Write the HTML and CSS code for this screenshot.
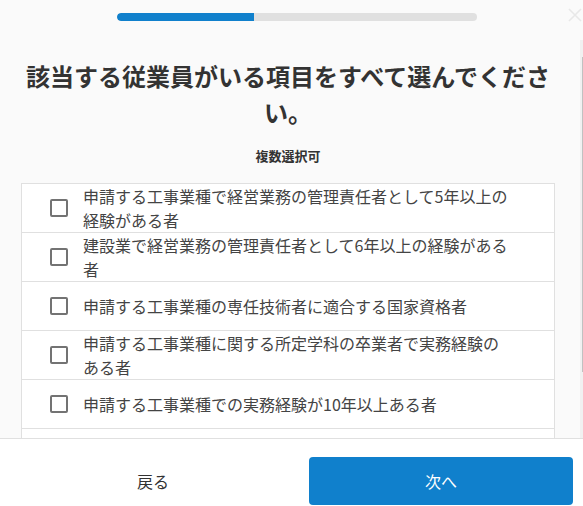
FILE: index.html
```html
<!DOCTYPE html>
<html lang="ja">
<head>
<meta charset="utf-8">
<title>従業員の選択</title>
<link rel="stylesheet" href="styles.css">
</head>
<body>
<div class="page">
  <header class="header">
    <div class="progress"><div class="progress-fill" style="width:38%"></div></div>
    <svg class="close" viewBox="0 0 14 14" width="14" height="14" aria-hidden="true"><path d="M1 1L13 13M13 1L1 13" stroke="#e8e8e8" stroke-width="1.6" fill="none"/></svg>
  </header>
  <main class="main">
    <div class="content">
      <h1 class="title">該当する従業員がいる項目をすべて選んでください。</h1>
      <p class="sub">複数選択可</p>
      <ul class="list">
        <li class="row"><span class="box"></span><span class="label">申請する工事業種で経営業務の管理責任者として5年以上の経験がある者</span></li>
        <li class="row"><span class="box"></span><span class="label">建設業で経営業務の管理責任者として6年以上の経験がある者</span></li>
        <li class="row"><span class="box"></span><span class="label">申請する工事業種の専任技術者に適合する国家資格者</span></li>
        <li class="row"><span class="box"></span><span class="label">申請する工事業種に関する所定学科の卒業者で実務経験のある者</span></li>
        <li class="row"><span class="box"></span><span class="label">申請する工事業種での実務経験が10年以上ある者</span></li>
        <li class="row"><span class="box"></span><span class="label">該当する者はいない</span></li>
      </ul>
    </div>
    <div class="scroll-track"><div class="scroll-thumb"></div></div>
  </main>
  <footer class="footer">
    <button class="btn btn-back" type="button">戻る</button>
    <button class="btn btn-next" type="button">次へ</button>
  </footer>
</div>
</body>
</html>
```
FILE: styles.css
```css
html, body {
  margin: 0;
  padding: 0;
  background: #fafafa;
}
body {
  font-family: "Noto Sans CJK JP", "Noto Sans", sans-serif;
  color: #333;
}
.page {
  display: flex;
  flex-direction: column;
  height: 506px;
  width: 583px;
  overflow: hidden;
}
.header {
  position: relative;
  height: 40px;
  flex: none;
  padding-top: 13px;
  box-sizing: border-box;
}
.progress {
  margin-left: 117px;
  width: 360px;
  height: 8px;
  border-radius: 4px;
  background: #e0e0e0;
  overflow: hidden;
}
.progress-fill {
  height: 100%;
  background: #1080cc;
  border-radius: 4px 0 0 4px;
}
.close {
  position: absolute;
  left: 568px;
  top: 8px;
}
.main {
  position: relative;
  flex: 1;
  overflow: hidden;
}
.content {
  width: 576px;
  padding-top: 18px;
}
.title {
  margin: 0;
  padding: 0 16px;
  font-size: 24px;
  line-height: 36px;
  font-weight: 700;
  text-align: center;
  color: #333;
}
.sub {
  margin: 16px 0 0;
  font-size: 13px;
  line-height: 20px;
  font-weight: 700;
  text-align: center;
  color: #333;
}
.list {
  list-style: none;
  margin: 17px 21px 0;
  padding: 0;
  border: 1px solid #e0e0e0;
  border-bottom: none;
  background: #fff;
}
.row {
  display: flex;
  align-items: center;
  min-height: 48px;
  padding: 0 41px 0 28px;
  border-bottom: 1px solid #e0e0e0;
  gap: 15px;
}
.box {
  flex: none;
  width: 18px;
  height: 18px;
  box-sizing: border-box;
  border: 2px solid #737373;
  border-radius: 2px;
}
.label {
  flex: 1;
  font-size: 16px;
  line-height: 24px;
  color: #444;
}
.scroll-track {
  position: absolute;
  left: 580px;
  top: 0;
  width: 3px;
  height: 100%;
  background: #f1f1f1;
}
.scroll-thumb {
  position: absolute;
  left: 2px;
  top: 17px;
  width: 1px;
  height: 315px;
  background: #c1c1c1;
}
.footer {
  flex: none;
  height: 68px;
  box-sizing: border-box;
  border-top: 1px solid #e0e0e0;
  background: #fff;
  display: grid;
  grid-template-columns: 264px 264px;
  column-gap: 24px;
  padding: 18px 0 0 21px;
  align-items: start;
}
.btn {
  height: 48px;
  border: none;
  border-radius: 4px;
  font-family: inherit;
  font-size: 16px;
  line-height: 48px;
  padding: 0;
  cursor: pointer;
}
.btn-back {
  background: transparent;
  color: #333;
}
.btn-next {
  background: #1080cc;
  color: #fff;
}
```
